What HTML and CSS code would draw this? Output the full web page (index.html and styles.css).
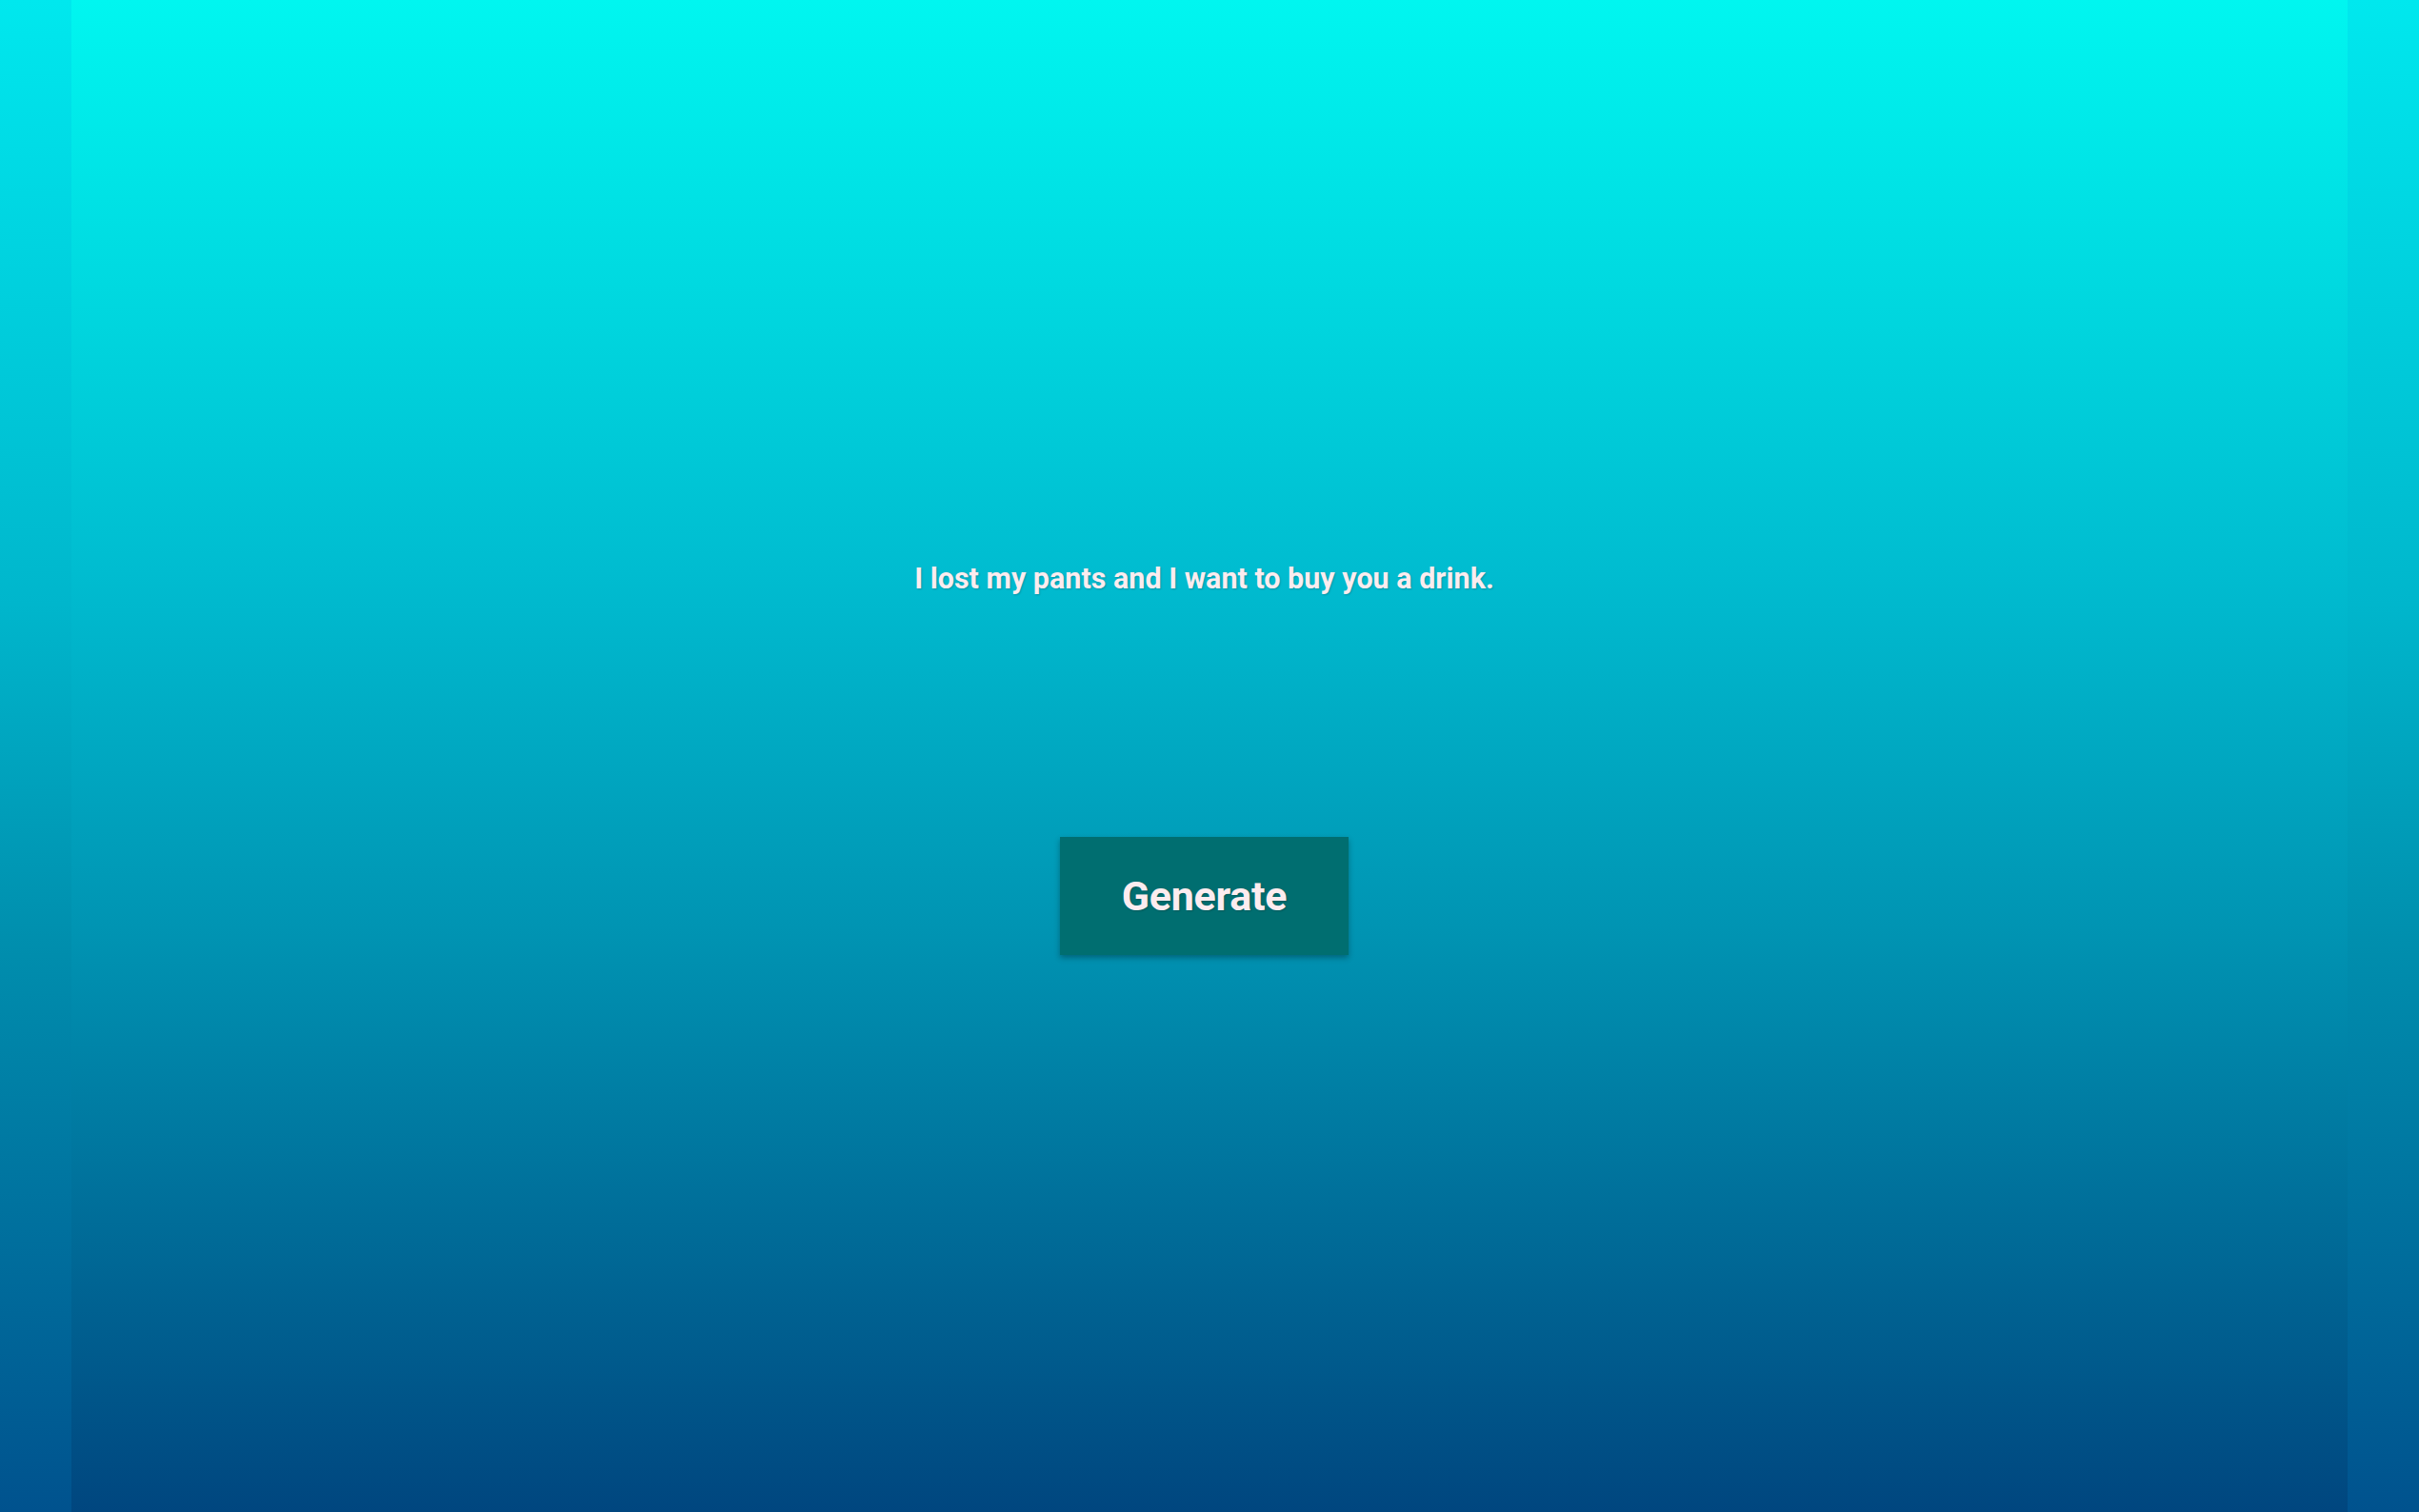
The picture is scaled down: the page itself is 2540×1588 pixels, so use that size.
FILE: index.html
```html
<!DOCTYPE html>
<html lang="en">
<head>
<meta charset="utf-8">
<title>Pickup Line Generator</title>
<link rel="stylesheet" href="styles.css">
</head>
<body>
  <main class="page">
    <section class="content">
      <p class="quote">I lost my pants and I want to buy you a drink.</p>
      <button class="generate" type="button">Generate</button>
    </section>
  </main>
</body>
</html>
```

FILE: styles.css
```css
html, body {
  margin: 0;
  padding: 0;
  height: 100%;
}

body {
  background: linear-gradient(to bottom, #00e8ee 0%, #00b6cc 40%, #008fae 62%, #00528e 100%);
  font-family: Roboto, "Liberation Sans", sans-serif;
  overflow: hidden;
}

.page {
  margin: 0 75px;
  min-height: 100vh;
  background: linear-gradient(to bottom, #00f6f0 0%, #00bcd0 38%, #0093b2 62%, #00467f 100%);
}

.content {
  display: flex;
  flex-direction: column;
  align-items: center;
  padding-top: 590px;
  padding-right: 11px;
}

.quote {
  margin: 0;
  font-size: 30.5px;
  line-height: 36px;
  font-weight: 700;
  color: #fcecef;
  text-shadow: 1px 1px 2px rgba(0, 0, 0, 0.2);
}

.generate {
  margin-top: 253px;
  width: 303px;
  height: 124px;
  border: none;
  background: #006e70;
  color: #fcecef;
  font-family: Roboto, "Liberation Sans", sans-serif;
  font-size: 43px;
  font-weight: 700;
  letter-spacing: -0.3px;
  box-shadow: 0 3px 6px rgba(0, 0, 0, 0.3);
  text-shadow: 1px 1px 2px rgba(0, 0, 0, 0.2);
  cursor: pointer;
}
```
